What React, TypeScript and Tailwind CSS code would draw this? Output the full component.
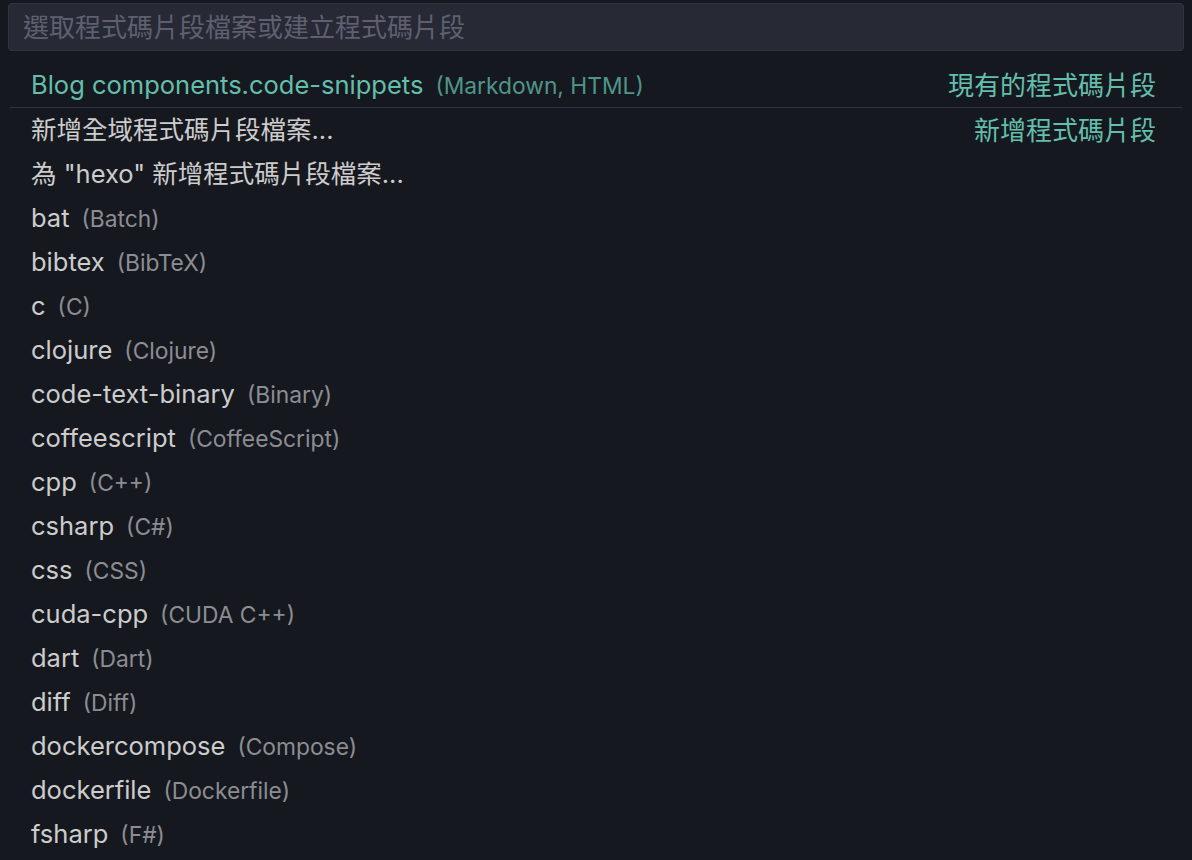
import React from "react";

const items: [string, string][] = [
  ["bat", "Batch"],
  ["bibtex", "BibTeX"],
  ["c", "C"],
  ["clojure", "Clojure"],
  ["code-text-binary", "Binary"],
  ["coffeescript", "CoffeeScript"],
  ["cpp", "C++"],
  ["csharp", "C#"],
  ["css", "CSS"],
  ["cuda-cpp", "CUDA C++"],
  ["dart", "Dart"],
  ["diff", "Diff"],
  ["dockercompose", "Compose"],
  ["dockerfile", "Dockerfile"],
  ["fsharp", "F#"],
];

export default function App() {
  return (
    <div
      className="w-[1192px] h-[860px] overflow-hidden bg-[#16181f] text-[#cccccc]"
      style={{ fontFamily: "Inter, 'Noto Sans CJK TC', sans-serif" }}
    >
      <div className="pt-[3px] px-[8px]">
        <div className="h-[48px] rounded-[4px] border border-[#31333f] bg-[#272935] flex items-center pl-[14px] text-[26px] text-[#5e6070]">
          選取程式碼片段檔案或建立程式碼片段
        </div>
      </div>

      <div className="mt-[13px] mx-[10px]">
        <div className="h-[44px] flex items-center pl-[21px] pr-[26px] border-b border-[#30323c] text-[#63bfac]">
          <span className="flex items-baseline">
            <span className="text-[25.5px]">Blog components.code-snippets</span>
            <span className="ml-[12px] text-[22.8px] opacity-75">(Markdown, HTML)</span>
          </span>
          <span className="ml-auto text-[26px]">現有的程式碼片段</span>
        </div>
        <div className="h-[44px] flex items-center pl-[21px] pr-[26px]">
          <span className="text-[25.5px]">新增全域程式碼片段檔案...</span>
          <span className="ml-auto text-[26px] text-[#63bfac]">新增程式碼片段</span>
        </div>
        <div className="h-[44px] flex items-center pl-[21px] pr-[26px]">
          <span className="text-[25.5px]">為 "hexo" 新增程式碼片段檔案...</span>
        </div>
        {items.map(([name, desc]) => (
          <div key={name} className="h-[44px] flex items-center pl-[21px] pr-[26px]">
            <span className="flex items-baseline">
              <span className="text-[25.5px]">{name}</span>
              <span className="ml-[12px] text-[22.8px] text-[#8c8d93]">({desc})</span>
            </span>
          </div>
        ))}
      </div>
    </div>
  );
}
